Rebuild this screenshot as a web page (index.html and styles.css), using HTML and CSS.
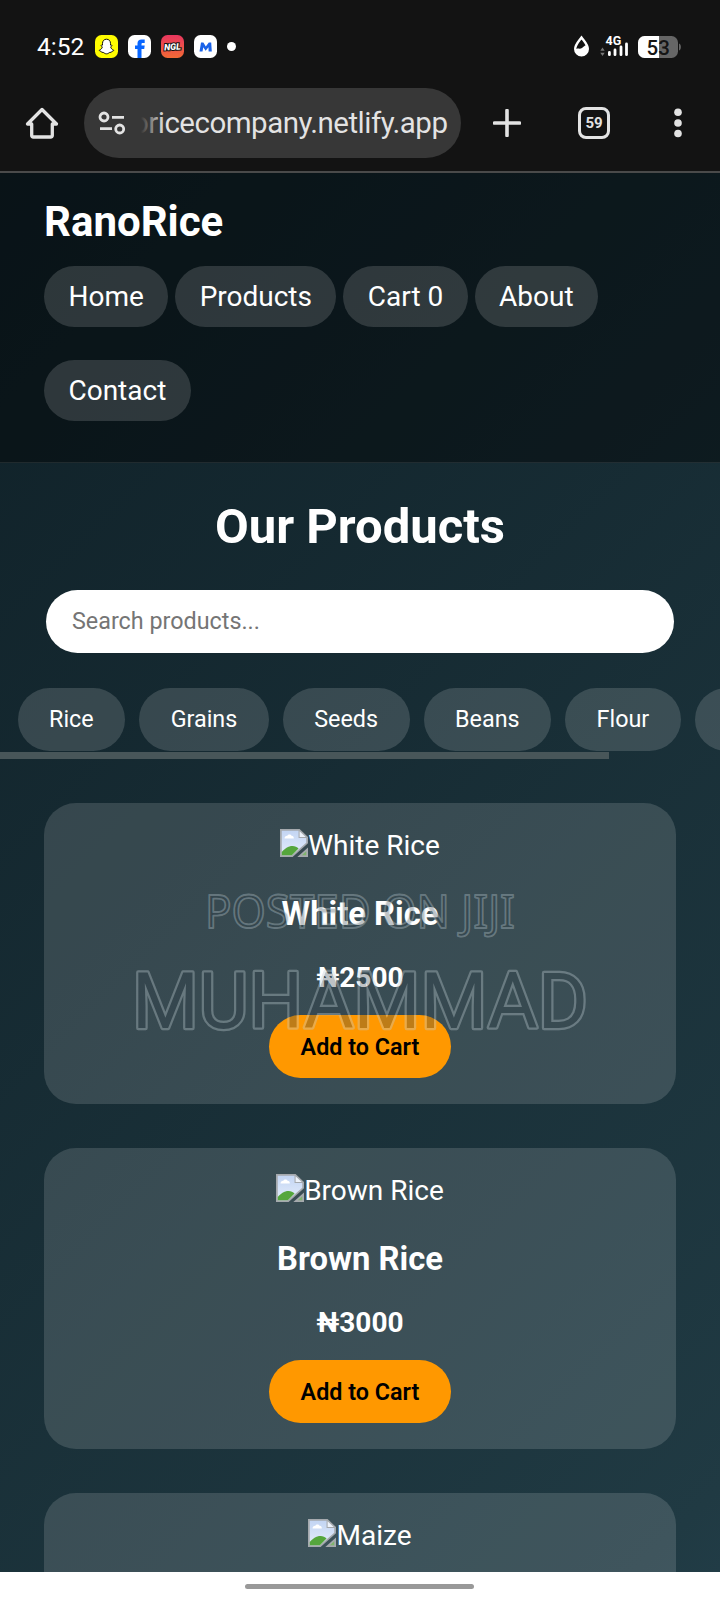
FILE: index.html
```html
<!DOCTYPE html>
<html lang="en">
<head>
<meta charset="utf-8">
<title>RanoRice</title>
<link rel="stylesheet" href="styles.css">
</head>
<body>
<svg class="defs" width="0" height="0" aria-hidden="true">
  <defs>
    <linearGradient id="sky" x1="0" y1="0" x2="0" y2="1"><stop offset="0" stop-color="#c3d5f3"/><stop offset="1" stop-color="#e4edfb"/></linearGradient>
    <linearGradient id="ngl" x1="0" y1="0" x2="0" y2="1"><stop offset="0" stop-color="#e8365f"/><stop offset="1" stop-color="#f26a35"/></linearGradient>
    <symbol id="broken" viewBox="0 0 16 16">
      <path d="M0 0H11.2L16 4.6V8.2L7.2 16H0Z" fill="#a5a9ad"/>
      <path d="M1 1H10.6V5.2H15V7.8L6.8 15H1Z" fill="url(#sky)"/>
      <path d="M2.6 5.4c0-1 .8-1.6 1.6-1.5.4-1.1 2-1.1 2.4 0 .9 0 1.3.7 1.3 1.5Z" fill="#fff"/>
      <path d="M1 15v-1.800c1.600-2 3.700-3.500 6.200-3.500 1.400 0 2.500.5 3.400 1.500L6.800 15Z" fill="#55a63c"/>
      <path d="M11.200 1.300V4.600H14.700Z" fill="#eef3fb"/>
      <path d="M16 10.500V16H9.900Z" fill="#a5a9ad"/>
      <path d="M15 12.700V15H12.500Z" fill="#7fb56c"/>
    </symbol>
  </defs>
</svg>
<div class="status">
  <span class="time">4:52</span>
  <svg class="app" viewBox="0 0 23 23"><rect width="23" height="23" rx="6.500" fill="#fffc00"/><path d="M11.500 4.200c2.500 0 4 1.800 4 4.200v1.700c.6.2 1.400-.2 1.500.5 0 .6-1.200.8-1.300 1.400 0 1 1.500 2.800 3 3.200.4.500-.9 1-1.800 1.200-.3.300-.1.900-.6.900-1.300-.2-1.900.2-2.600.8-1.300 1-3.100 1-4.400 0-.7-.6-1.300-1-2.600-.8-.5 0-.3-.6-.6-.9-.9-.2-2.200-.7-1.800-1.200 1.500-.4 3-2.200 3-3.200-.1-.6-1.300-.8-1.300-1.400.1-.7.900-.3 1.500-.5V8.400c0-2.400 1.500-4.200 4-4.200Z" fill="#fff" stroke="#111" stroke-width="1"/></svg>
  <svg class="app" viewBox="0 0 23 23"><rect width="23" height="23" rx="6.500" fill="#fff"/><path d="M9.500 23V14H7v-3.500h2.500V8.600C9.500 6 11 4.500 13.600 4.500h3.100v3.400h-1.900c-1 0-1.300.5-1.300 1.300v1.300h3.200L16.200 14h-2.700v9Z" fill="#0866ff"/></svg>
  <svg class="app" viewBox="0 0 23 23"><rect width="23" height="23" rx="6.500" fill="url(#ngl)"/><text class="ngl" x="11.500" y="15" text-anchor="middle" transform="rotate(-3 11.500 12)">NGL</text></svg>
  <svg class="app" viewBox="0 0 23 23"><rect width="23" height="23" rx="6.500" fill="#fff"/><path d="M5.500 16.500 7 7.500H9.400L11.800 11.500 14.800 7.500H17.200L17.800 16.500H14.600L14.500 12.300 11.600 15.800 9.300 12.300 8.500 16.500Z" fill="#1a62e8"/></svg>
  <i class="dot"></i>
  <svg class="system" viewBox="0 0 116 30">
    <path d="M11.500 5.500C9 9 5.200 12.600 5.200 17a6.300 6.300 0 0 0 12.600 0c0-4.400-3.800-8-6.300-11.500Z" fill="none" stroke="#fff" stroke-width="2.400"/>
    <path d="M5.500 17.500c2.500-2 4 .2 6.500-1.500 2-1.400 3-3.200 5-2.500 1.800 6-1 9.700-5.500 9.700-3.500 0-6-2.700-6-5.700Z" fill="#fff"/>
    <text class="net" x="35.500" y="12.800">4G</text>
    <path d="M32.500 15.500l2.200 3.200h-4.400Zm0 8.500 2.200-3.200h-4.400Z" fill="#777"/>
    <path d="M39.400 20.500v2.200M45 18v4.700M51 15v7.700M56.500 12v10.700" stroke="#fff" stroke-width="2.800" stroke-linecap="round"/>
    <rect x="68" y="4" width="40" height="22" rx="6.500" fill="#666"/>
    <path d="M89 4H74.500A6.500 6.500 0 0 0 68 10.500v9A6.500 6.500 0 0 0 74.500 26H89Z" fill="#fff"/>
    <path d="M109 11.500c2.500.8 2.500 6.200 0 7Z" fill="#666"/>
    <text class="battery" x="76.500" y="22.600">53</text>
  </svg>
</div>
<div class="browser">
  <svg class="home" viewBox="0 0 34 34"><path d="M2.500 18H6.700V29.500a1.500 1.500 0 0 0 1.500 1.500H25.800a1.500 1.500 0 0 0 1.500-1.500V18H31.500L17 3.500Z" fill="none" stroke="#e3e3e3" stroke-width="3.300" stroke-linejoin="round"/></svg>
  <div class="address">
    <svg class="tune" viewBox="0 0 28 24"><g fill="none" stroke="#e3e3e3" stroke-width="2.800"><circle cx="6" cy="6" r="4"/><path d="M14 6.300H26M2 17.700H14"/><circle cx="21.700" cy="18" r="4"/></g></svg>
    <svg class="url" viewBox="0 0 320 50"><defs><linearGradient id="fade" gradientUnits="userSpaceOnUse" x1="1" y1="0" x2="24" y2="0"><stop offset="0" stop-color="#373737"/><stop offset="1" stop-color="#e3e3e3"/></linearGradient></defs><text x="-8" y="34.700" textLength="316" fill="url(#fade)">oricecompany.netlify.app</text></svg>
  </div>
  <svg class="plus" viewBox="0 0 28 28"><path d="M14 1.500V26.500M1.500 14H26.500" stroke="#e3e3e3" stroke-width="3.600" stroke-linecap="round"/></svg>
  <div class="tabs">59</div>
  <svg class="more" viewBox="0 0 8 30"><g fill="#e3e3e3"><circle cx="4" cy="4.300" r="3.800"/><circle cx="4" cy="15" r="3.800"/><circle cx="4" cy="25.500" r="3.800"/></g></svg>
</div>
<div class="page">
  <header>
    <h1>RanoRice</h1>
    <nav><a>Home</a> <a>Products</a> <a>Cart 0</a> <a>About</a> <a>Contact</a></nav>
  </header>
  <h2>Our Products</h2>
  <input class="search" type="text" placeholder="Search products...">
  <div class="cats"><span>Rice</span><span>Grains</span><span>Seeds</span><span>Beans</span><span>Flour</span><span class="next"></span></div>
  <div class="scrollbar"></div>
  <main>
    <article>
      <div class="photo"><svg><use href="#broken"/></svg>White Rice</div>
      <h3>White Rice</h3><p>₦2500</p><button>Add to Cart</button>
      <svg class="mark" viewBox="0 0 460 150">
        <defs>
          <mask id="outline" maskUnits="userSpaceOnUse" x="-10" y="70" width="480" height="90">
            <use href="#seller" class="grow"/>
            <use href="#seller" class="cut"/>
          </mask>
        </defs>
        <text class="small" x="71" y="43" textLength="310" lengthAdjust="spacingAndGlyphs">POSTED ON JIJI</text>
        <text id="seller" x="-2" y="143" textLength="456" lengthAdjust="spacingAndGlyphs">MUHAMMAD</text>
        <rect class="ring" x="-10" y="70" width="480" height="90" mask="url(#outline)"/>
      </svg>
    </article>
    <article>
      <div class="photo"><svg><use href="#broken"/></svg>Brown Rice</div>
      <h3>Brown Rice</h3><p>₦3000</p><button>Add to Cart</button>
    </article>
    <article>
      <div class="photo"><svg><use href="#broken"/></svg>Maize</div>
    </article>
  </main>
</div>
<div class="gesture"><i></i></div>
</body>
</html>
```
FILE: styles.css
```css
* { box-sizing: border-box; }
body { margin: 0; width: 720px; height: 1600px; overflow: hidden; background: #131313; color: #fff; font-family: Roboto, "Liberation Sans", sans-serif; font-size: 28px; display: flex; flex-direction: column; }
svg { display: block; flex: none; }
.defs { position: absolute; }
.status { height: 88px; padding: 35px 0 0 37px; display: flex; align-items: flex-start; gap: 10px; }
.time { font-size: 24.500px; line-height: 23px; width: 48px; white-space: nowrap; }
.app { width: 23px; height: 23px; }
.ngl { font: italic 900 9px Roboto, sans-serif; fill: #fff; stroke: #111; stroke-width: 2px; paint-order: stroke; }
.dot { width: 9px; height: 9px; border-radius: 50%; background: #fff; margin-top: 7px; }
.system { width: 116px; height: 30px; margin: -3px 34px 0 auto; }
.net { font: 700 12.500px Roboto, sans-serif; fill: #fff; }
.battery { font: 500 20.500px Roboto, sans-serif; fill: #151515; }
.browser { height: 85px; border-bottom: 2px solid #4a4a4a; display: flex; align-items: flex-start; padding-left: 25px; flex: none; }
.home { width: 34px; height: 34px; margin: 18px 25px 0 0; }
.address { width: 377px; height: 70px; border-radius: 35px; background: #373737; display: flex; align-items: center; padding-left: 14px; }
.tune { width: 28px; height: 24px; }
.url { width: 320px; height: 50px; margin-left: 14px; font-size: 29.500px; }
.plus { width: 28px; height: 28px; margin: 21px 0 0 32px; }
.tabs { width: 32px; height: 32px; margin: 19px 0 0 57px; border: 3px solid #e3e3e3; border-radius: 8px; color: #e3e3e3; font: 700 15px/27px Roboto, sans-serif; text-align: center; }
.more { width: 8px; height: 30px; margin: 20px 0 0 64px; }
.page { flex: 1; min-height: 0; overflow: hidden; background: linear-gradient(135deg, #0f2027, #203a43 96%, #213c46); }
header { height: 290px; padding: 24px 44px 0; background: rgba(0,0,0,.4); border-bottom: 1px solid rgba(255,255,255,.09); }
h1 { margin: 0; font-size: 42px; line-height: 49px; }
nav { margin-top: 4px; line-height: 94px; }
nav a { display: inline-block; line-height: 33px; padding: 14px 24.450px; border-radius: 31px; background: rgba(255,255,255,.15); }
h2 { margin: 35px 0 0; font-size: 49px; line-height: 57px; text-align: center; }
.search { display: block; width: 628px; height: 63px; margin: 35px auto 0; padding: 0 26px 2px; border: 0; border-radius: 32px; background: #fff; font: 23.330px Roboto, sans-serif; }
.search::placeholder { color: #757575; opacity: 1; }
.cats { display: flex; gap: 14px; margin: 35px 0 0 17.500px; overflow: hidden; font-size: 23.330px; line-height: 63px; }
.cats span { flex: none; height: 63px; padding: 0 31.500px; border-radius: 32px; background: rgba(255,255,255,.15); }
.cats .next { width: 120px; }
.scrollbar { width: 609px; height: 7px; margin-top: 1px; background: #485659; }
main { padding: 44px 44px 0; display: grid; gap: 44.500px; }
article { position: relative; height: 300.500px; border-radius: 32px; background: rgba(255,255,255,.14); padding-top: 26px; text-align: center; }
.photo { display: flex; justify-content: center; line-height: 33px; height: 33px; }
.photo svg { width: 28px; height: 28px; }
h3 { margin: 33px 0 0; font-size: 32.760px; line-height: 38px; }
p { margin: 28px 0 0; font-weight: 700; line-height: 33px; }
button { display: block; width: 182px; height: 63px; margin: 21px auto 0; padding: 0; border: 0; border-radius: 32px; background: #ff9800; color: #000; font: 600 23.330px Roboto, sans-serif; }
.mark { position: absolute; left: 90px; top: 82px; width: 460px; height: 150px; overflow: visible; fill: rgba(50,66,74,.32); }
.small { font-family: "Noto Sans", "Open Sans", sans-serif; font-size: 46px; stroke: rgba(190,205,212,.36); stroke-width: 1.800px; stroke-linejoin: round; }
#seller { font-family: Roboto, sans-serif; font-size: 77px; font-weight: 450; }
.grow { fill: #fff; stroke: #fff; stroke-width: 4.400px; stroke-linejoin: round; }
.cut { fill: #000; stroke: none; }
.mark > #seller { fill: inherit; }
.mark mask use { --tone: initial; }
.ring { fill: rgba(190,205,212,.36); }
.gesture { height: 28px; flex: none; background: #fff; display: flex; justify-content: center; padding: 12px 1px 0 0; }
.gesture i { width: 229px; height: 5px; border-radius: 3px; background: #999; }
```
